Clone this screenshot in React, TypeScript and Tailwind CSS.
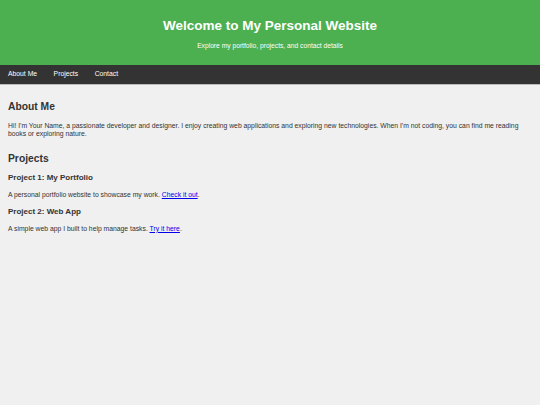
export default function App() {
  return (
    <div className="min-h-[405px] bg-[#f0f0f0] text-[#333] font-['Liberation_Sans',Arial,sans-serif]">
      <header className="bg-[#4caf50] text-white text-center h-[65px] flex flex-col items-center pt-[17.5px]">
        <h1 className="text-[13.5px] font-bold leading-[15px]">Welcome to My Personal Website</h1>
        <p className="text-[6.7px] leading-[8px] mt-[9px]">Explore my portfolio, projects, and contact details</p>
      </header>
      <nav className="bg-[#333] h-[20px] border-b border-[#bbb] flex items-center px-[8px] gap-[16.5px] text-white text-[6.8px]">
        <span>About Me</span>
        <span>Projects</span>
        <span>Contact</span>
      </nav>
      <main className="px-[8px]">
        <section className="pt-[16px]">
          <h2 className="text-[10.3px] font-bold leading-[12px]">About Me</h2>
          <p className="text-[6.8px] leading-[7.5px] mt-[9px]">
            Hi! I'm Your Name, a passionate developer and designer. I enjoy creating web applications and exploring new technologies. When I'm not coding, you can find me reading books or exploring nature.
          </p>
        </section>
        <section className="pt-[16px]">
          <h2 className="text-[10.3px] font-bold leading-[12px]">Projects</h2>
          <h3 className="text-[8px] font-bold leading-[10px] mt-[8px]">Project 1: My Portfolio</h3>
          <p className="text-[6.8px] leading-[8px] mt-[8px]">
            A personal portfolio website to showcase my work. <a href="#" className="text-[#00e] underline">Check it out</a>.
          </p>
          <h3 className="text-[8px] font-bold leading-[10px] mt-[8px]">Project 2: Web App</h3>
          <p className="text-[6.8px] leading-[8px] mt-[7.5px]">
            A simple web app I built to help manage tasks. <a href="#" className="text-[#00e] underline">Try it here</a>.
          </p>
        </section>
      </main>
    </div>
  );
}
